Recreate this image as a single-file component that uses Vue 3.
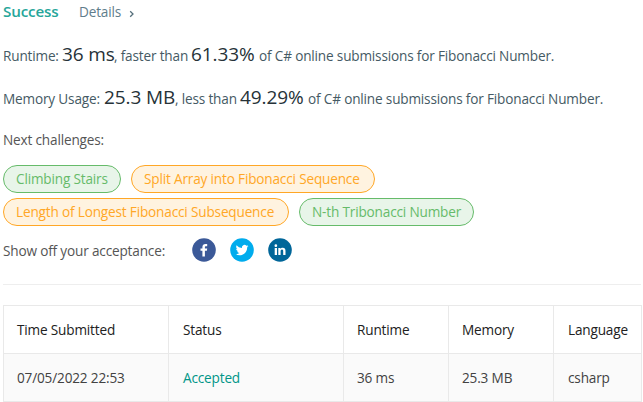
<script setup>
const challenges = [
  [
    { title: 'Climbing Stairs', level: 'easy', id: 'stairs' },
    { title: 'Split Array into Fibonacci Sequence', level: 'medium', id: 'split' },
  ],
  [
    { title: 'Length of Longest Fibonacci Subsequence', level: 'medium', id: 'longest' },
    { title: 'N-th Tribonacci Number', level: 'easy', id: 'tribonacci' },
  ],
]
</script>

<template>
  <main class="result">
    <header class="head">
      <span class="success">Success</span>
      <a class="details">Details
        <svg class="chevron" width="6" height="8" viewBox="0 0 6 8"><path d="M1.2 1.2L4 4L1.2 6.8" fill="none" stroke="#546e7a" stroke-width="1.3" /></svg>
      </a>
    </header>
    <p class="stat runtime"><span>Runtime:</span><b>36 ms</b><span>, faster than</span><b>61.33%</b><span>of C# online submissions for Fibonacci Number.</span></p>
    <p class="stat memory"><span>Memory Usage:</span><b>25.3 MB</b><span>, less than</span><b>49.29%</b><span>of C# online submissions for Fibonacci Number.</span></p>
    <p class="next"><span>Next challenges:</span></p>
    <div class="challenges">
      <div v-for="(row, i) in challenges" :key="i" class="row">
        <a v-for="c in row" :key="c.id" class="pill" :class="[c.level, c.id]"><span>{{ c.title }}</span></a>
      </div>
    </div>
    <div class="share">
      <span class="share-label">Show off your acceptance:</span>
      <svg width="24" height="24" viewBox="0 0 24 24"><circle cx="12" cy="12" r="11.8" fill="#3b5998" /><path fill="#fff" d="M12.9 18.400v-5.600h2l.3-2.300h-2.300V9.200c0-.7.2-1 1.100-1h1.200v-2.100c-.2 0-.9-.1-1.800-.1-1.800 0-3 1-3 2.900v1.600H8.500v2.300h1.900v5.600z" /></svg>
      <svg width="24" height="24" viewBox="0 0 24 24"><circle cx="12" cy="12" r="11.8" fill="#00aced" /><path fill="#fff" d="M18.400 8.100c-.5.2-1 .4-1.500.4.5-.3 1-.8 1.200-1.400-.5.3-1.100.5-1.700.6a2.630 2.630 0 0 0-4.480 2.400 7.460 7.460 0 0 1-5.410-2.740 2.630 2.630 0 0 0 .81 3.510c-.4 0-.8-.1-1.190-.3 0 1.300.9 2.400 2.110 2.600-.4.1-.8.1-1.190 0a2.630 2.630 0 0 0 2.450 1.830A5.270 5.270 0 0 1 5.600 16.090a7.430 7.430 0 0 0 4.030 1.180c4.900 0 7.650-4.100 7.480-7.820.5-.35.95-.82 1.290-1.350z" /></svg>
      <svg width="24" height="24" viewBox="0 0 24 24"><circle cx="12" cy="12" r="11.8" fill="#006699" /><path fill="#fff" d="M6.700 9.900h2.300v7h-2.300zM7.850 6.300a1.350 1.350 0 1 1 0 2.700 1.350 1.350 0 0 1 0-2.700zM10.300 9.900h2.200v1c.4-.7 1.100-1.200 2.200-1.200 2.300 0 2.800 1.500 2.800 3.400v3.800h-2.300v-3.400c0-.9-.1-1.900-1.200-1.900s-1.400.9-1.400 1.800v3.500h-2.300z" /></svg>
    </div>
    <hr>
    <table>
      <thead><tr><th class="c1">Time Submitted</th><th class="c2">Status</th><th class="c3">Runtime</th><th class="c3">Memory</th><th class="c5">Language</th></tr></thead>
      <tbody><tr><td>07/05/2022 22:53</td><td class="c2 accepted">Accepted</td><td>36 ms</td><td>25.3 MB</td><td class="c5">csharp</td></tr></tbody>
    </table>
  </main>
</template>

<style>
body { background: #fff; overflow: hidden; }
</style>

<style scoped>
.result { box-sizing: border-box; width: 643px; height: 402px; padding: 0 1px 0 3px; font-family: "Open Sans", "Noto Sans", sans-serif; font-size: 13.6px; letter-spacing: -0.17px; line-height: 20px; color: #546e7a; white-space: nowrap; overflow: hidden; }
p { margin: 0; }
.head { display: flex; align-items: baseline; height: 33px; }
.success { width: 76px; font-size: 15.2px; font-weight: 600; color: #26a69a; line-height: 22px; }
.details { display: flex; align-items: center; gap: 8px; color: #607d8b; }
.chevron { margin-top: 3px; }
.stat { display: flex; align-items: baseline; height: 43px; line-height: 43px; color: #455a64; }
.stat b { font-size: 19px; font-weight: 400; color: #263238; letter-spacing: -0.1px; }
.runtime > :nth-child(1) { width: 59px; }
.runtime > :nth-child(2) { width: 52px; }
.runtime > :nth-child(3) { width: 77px; }
.runtime > :nth-child(4) { width: 68px; }
.memory > :nth-child(1) { width: 101px; }
.memory > :nth-child(2) { width: 71px; }
.memory > :nth-child(3) { width: 65px; }
.memory > :nth-child(4) { width: 68px; }
.next { height: 46px; padding-top: 11px; box-sizing: border-box; color: #555; }
.challenges { display: flex; flex-direction: column; gap: 5px; }
.row { display: flex; gap: 10px; }
.pill { box-sizing: border-box; height: 28px; padding: 0 12px; border: 1px solid; border-radius: 14px; line-height: 26px; }
.stairs { width: 118px; }
.split { width: 244px; }
.longest { width: 286px; }
.tribonacci { width: 175px; }
.easy { color: #66bb6a; border-color: #66bb6a; background: #e8f5e9; }
.medium { color: #ffa726; border-color: #ffa726; background: #fff3e0; }
.share { display: flex; align-items: center; gap: 14px; height: 48px; color: #555; }
.share-label { width: 175px; padding-top: 2px; }
hr { height: 1px; margin: 10px 1px 20px 0; border: 0; background: #eee; }
table { width: 639px; border-collapse: collapse; table-layout: fixed; }
th, td { box-sizing: border-box; height: 48px; padding: 0 0 0 13px; border: 1px solid #e9e9e9; text-align: left; font-weight: 400; }
th { color: #212121; }
td { color: #424242; background: #fafafa; }
.c1 { width: 165px; }
th.c2 { width: 175px; }
.c2, .c5 { padding-left: 14px; }
.c3 { width: 105px; }
.accepted { color: #009688; }
</style>
